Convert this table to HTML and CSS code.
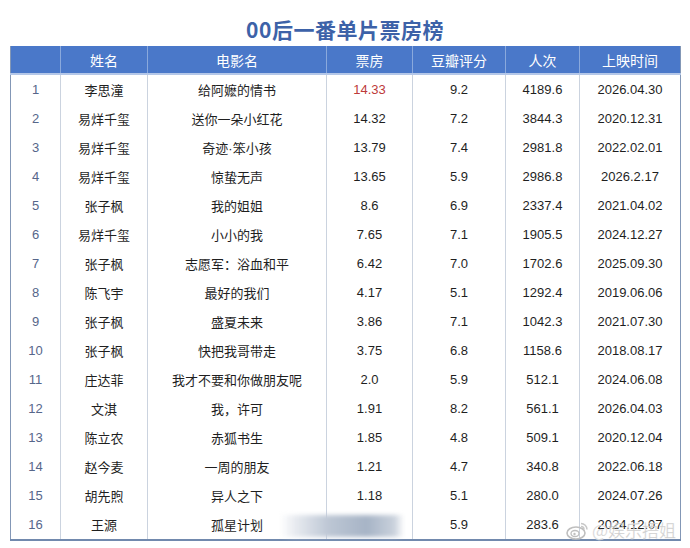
FILE: index.html
```html
<!DOCTYPE html>
<html lang="zh-CN">
<head>
<meta charset="utf-8">
<title>00后一番单片票房榜</title>
<link rel="stylesheet" href="styles.css">
</head>
<body>
<div class="page">
  <h1 class="title">00后一番单片票房榜</h1>
  <table class="board">
    <colgroup>
      <col class="c-no"><col class="c-name"><col class="c-movie"><col class="c-box"><col class="c-score"><col class="c-people"><col class="c-date">
    </colgroup>
    <thead>
      <tr><th></th><th>姓名</th><th>电影名</th><th>票房</th><th>豆瓣评分</th><th>人次</th><th>上映时间</th></tr>
    </thead>
    <tbody>
      <tr><td class="no">1</td><td>李思潼</td><td>给阿嬷的情书</td><td class="hot">14.33</td><td>9.2</td><td>4189.6</td><td>2026.04.30</td></tr>
      <tr><td class="no">2</td><td>易烊千玺</td><td>送你一朵小红花</td><td>14.32</td><td>7.2</td><td>3844.3</td><td>2020.12.31</td></tr>
      <tr><td class="no">3</td><td>易烊千玺</td><td>奇迹·笨小孩</td><td>13.79</td><td>7.4</td><td>2981.8</td><td>2022.02.01</td></tr>
      <tr><td class="no">4</td><td>易烊千玺</td><td>惊蛰无声</td><td>13.65</td><td>5.9</td><td>2986.8</td><td>2026.2.17</td></tr>
      <tr><td class="no">5</td><td>张子枫</td><td>我的姐姐</td><td>8.6</td><td>6.9</td><td>2337.4</td><td>2021.04.02</td></tr>
      <tr><td class="no">6</td><td>易烊千玺</td><td>小小的我</td><td>7.65</td><td>7.1</td><td>1905.5</td><td>2024.12.27</td></tr>
      <tr><td class="no">7</td><td>张子枫</td><td>志愿军：浴血和平</td><td>6.42</td><td>7.0</td><td>1702.6</td><td>2025.09.30</td></tr>
      <tr><td class="no">8</td><td>陈飞宇</td><td>最好的我们</td><td>4.17</td><td>5.1</td><td>1292.4</td><td>2019.06.06</td></tr>
      <tr><td class="no">9</td><td>张子枫</td><td>盛夏未来</td><td>3.86</td><td>7.1</td><td>1042.3</td><td>2021.07.30</td></tr>
      <tr><td class="no">10</td><td>张子枫</td><td>快把我哥带走</td><td>3.75</td><td>6.8</td><td>1158.6</td><td>2018.08.17</td></tr>
      <tr><td class="no">11</td><td>庄达菲</td><td>我才不要和你做朋友呢</td><td>2.0</td><td>5.9</td><td>512.1</td><td>2024.06.08</td></tr>
      <tr><td class="no">12</td><td>文淇</td><td>我，许可</td><td>1.91</td><td>8.2</td><td>561.1</td><td>2026.04.03</td></tr>
      <tr><td class="no">13</td><td>陈立农</td><td>赤狐书生</td><td>1.85</td><td>4.8</td><td>509.1</td><td>2020.12.04</td></tr>
      <tr><td class="no">14</td><td>赵今麦</td><td>一周的朋友</td><td>1.21</td><td>4.7</td><td>340.8</td><td>2022.06.18</td></tr>
      <tr><td class="no">15</td><td>胡先煦</td><td>异人之下</td><td>1.18</td><td>5.1</td><td>280.0</td><td>2024.07.26</td></tr>
      <tr><td class="no">16</td><td>王源</td><td>孤星计划</td><td></td><td>5.9</td><td>283.6</td><td>2024.12.07</td></tr>
    </tbody>
  </table>
  <div class="smear"></div>
  <div class="watermark">
    <svg class="wb" width="24" height="20" viewBox="0 0 24 20" aria-hidden="true">
      <ellipse cx="10" cy="13" rx="9" ry="6" fill="none" stroke="#bfbfbf" stroke-width="1.6"/>
      <ellipse cx="9" cy="13.5" rx="4" ry="3" fill="none" stroke="#bfbfbf" stroke-width="1.3"/>
      <circle cx="8.5" cy="14" r="1.2" fill="#bfbfbf"/>
      <path d="M15 3.5a6 6 0 0 1 6 6" fill="none" stroke="#c8c8c8" stroke-width="1.5"/>
      <path d="M15 6.5a3 3 0 0 1 3 3" fill="none" stroke="#c8c8c8" stroke-width="1.5"/>
    </svg>
    <span>@娱乐捂姐</span>
  </div>
</div>
</body>
</html>
```

FILE: styles.css
```css
html, body {
  margin: 0;
  padding: 0;
  background: #ffffff;
}

.page {
  position: relative;
  width: 690px;
  height: 548px;
  overflow: hidden;
  font-family: "Liberation Sans", "Noto Sans CJK SC", sans-serif;
  color: #1f1f1f;
}

.title {
  margin: 0;
  height: 46px;
  box-sizing: border-box;
  padding-top: 17px;
  text-align: center;
  font-family: "Noto Sans CJK SC", sans-serif;
  font-weight: bold;
  font-size: 21px;
  line-height: 24px;
  letter-spacing: 0.5px;
  color: #3d62a8;
}

.board {
  margin-left: 10px;
  width: 670px;
  table-layout: fixed;
  border-collapse: collapse;
  border-left: 1px solid #8397b6;
  border-right: 1px solid #8397b6;
  border-bottom: 2px solid #7189ad;
}

.c-no { width: 50px; }
.c-name { width: 87px; }
.c-movie { width: 179px; }
.c-box { width: 86px; }
.c-score { width: 93px; }
.c-people { width: 74px; }
.c-date { width: 101px; }

.board th {
  height: 27px;
  padding: 0;
  background: #4a78c9;
  color: #ffffff;
  font-family: "Noto Sans CJK SC", sans-serif;
  font-weight: normal;
  font-size: 14px;
  border-left: 1px solid #8aa9dc;
  border-bottom: 2px solid #b4c7e8;
}

.board th:first-child {
  border-left: none;
}

.board td {
  height: 29px;
  padding: 0;
  text-align: center;
  font-size: 13px;
  border-left: 1px solid #cbd3df;
  white-space: nowrap;
}

.board td:first-child {
  border-left: none;
}

.board td.no {
  color: #56668a;
}

.board td.hot {
  color: #bd3a3a;
}

.smear {
  position: absolute;
  left: 280px;
  top: 515px;
  width: 124px;
  height: 22px;
  background: linear-gradient(90deg, rgba(255,255,255,0) 0%, #e8ebf0 12%, #bcc6d4 40%, #a7b4c6 70%, #c9d1dc 92%, rgba(255,255,255,0) 100%);
  filter: blur(2px);
}

.watermark {
  position: absolute;
  left: 566px;
  top: 517px;
  display: flex;
  align-items: center;
  gap: 2px;
  font-family: "Noto Sans CJK SC", sans-serif;
  font-size: 17px;
  color: rgba(190, 190, 190, 0.75);
}

.watermark span {
  -webkit-text-stroke: 0.4px rgba(255,255,255,0.6);
}
```
